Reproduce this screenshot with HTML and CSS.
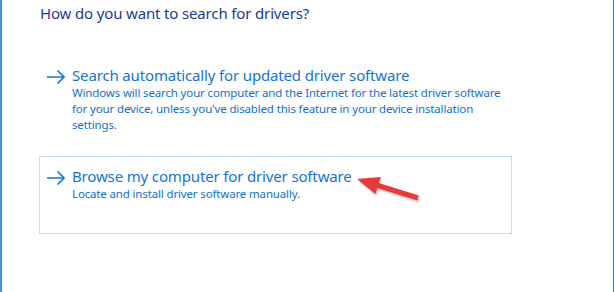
FILE: index.html
```html
<!DOCTYPE html>
<html>
<head>
<meta charset="utf-8">
<link rel="stylesheet" href="styles.css">
</head>
<body>
<div class="window">
  <div class="content">
    <h1 class="title">How do you want to search for drivers?</h1>
    <div class="options">
      <div class="option">
        <svg class="arrow" width="18" height="14" viewBox="0 0 18 14"><path d="M0 7H17M10.5 0.5L17 7L10.5 13.5" fill="none" stroke="#1874d2" stroke-width="1.6"/></svg>
        <div class="option-text">
          <div class="option-head">Search automatically for updated driver software</div>
          <div class="option-desc">Windows will search your computer and the Internet for the latest driver software for your device, unless you've disabled this feature in your device installation settings.</div>
        </div>
      </div>
      <div class="option selected">
        <svg class="arrow" width="18" height="14" viewBox="0 0 18 14"><path d="M0 7H17M10.5 0.5L17 7L10.5 13.5" fill="none" stroke="#1874d2" stroke-width="1.6"/></svg>
        <div class="option-text">
          <div class="option-head">Browse my computer for driver software</div>
          <div class="option-desc">Locate and install driver software manually.</div>
        </div>
        <svg class="pointer" width="72" height="36" viewBox="0 0 72 36"><defs><filter id="sh" x="-20%" y="-40%" width="140%" height="180%"><feDropShadow dx="1" dy="1.5" stdDeviation="1" flood-color="#000" flood-opacity="0.3"/></filter></defs><polygon filter="url(#sh)" fill="#e53a3a" points="3,8 26.7,5.9 24.7,12.1 64.7,24.6 63.3,29.4 23.3,16.9 21.3,23.1"/></svg>
      </div>
    </div>
  </div>
</div>
</body>
</html>
```

FILE: styles.css
```css
html, body {
  margin: 0;
  padding: 0;
  background: #fff;
}
.window {
  width: 614px;
  height: 292px;
  box-sizing: border-box;
  border-left: 2px solid #3c97d3;
  border-right: 1px solid #3b7dc0;
  background: #fff;
  font-family: "Noto Sans", "Open Sans", sans-serif;
}
.content {
  padding-left: 37px;
}
.title {
  margin: 0;
  padding: 3px 0 0 1px;
  font-size: 15px;
  letter-spacing: -0.15px;
  line-height: 20px;
  font-weight: normal;
  color: #1d3a93;
}
.options {
  display: flex;
  flex-direction: column;
  gap: 22px;
  margin-top: 32px;
  width: 473px;
}
.option {
  position: relative;
  display: flex;
  align-items: flex-start;
  gap: 7px;
  min-height: 78px;
  box-sizing: border-box;
  border: 1px solid transparent;
  padding: 9px 8px 0 7px;
}
.option.selected {
  border-color: #c3def3;
}
.arrow {
  flex: none;
  margin-top: 5px;
}
.option-head {
  font-size: 15px;
  letter-spacing: -0.15px;
  line-height: 20px;
  color: #1474d4;
}
.option-desc {
  font-size: 11.5px;
  letter-spacing: -0.15px;
  line-height: 16px;
  color: #1170d0;
}
.pointer {
  position: absolute;
  left: 314px;
  top: 14px;
}
```
